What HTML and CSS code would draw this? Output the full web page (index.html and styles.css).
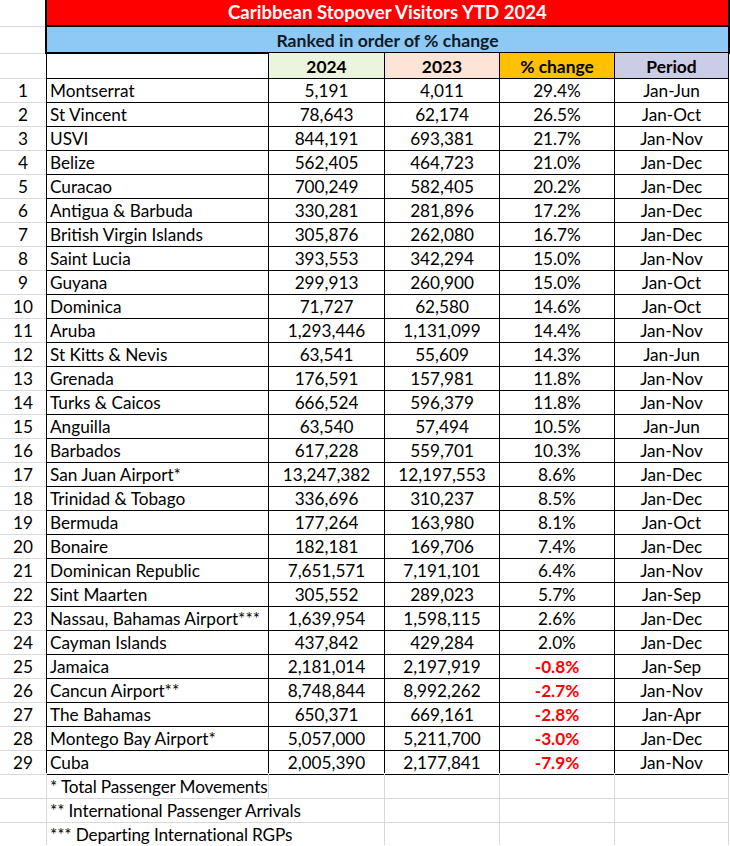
FILE: index.html
```html
<!DOCTYPE html>
<html lang="en">
<head>
<meta charset="utf-8">
<title>Caribbean Stopover Visitors YTD 2024</title>
<link rel="stylesheet" href="styles.css">
</head>
<body>
<div class="sheet">
  <div class="row band title-row"><div class="num"></div><div class="band-cell title">Caribbean Stopover Visitors YTD 2024</div></div>
  <div class="row band sub-row"><div class="num"></div><div class="band-cell sub">Ranked in order of % change</div></div>
  <div class="row head"><div class="num"></div><div class="c name"></div><div class="c y24">2024</div><div class="c y23">2023</div><div class="c pct">% change</div><div class="c per last">Period</div></div>

  <div class="row"><div class="num">1</div><div class="c name">Montserrat</div><div class="c">5,191</div><div class="c">4,011</div><div class="c">29.4%</div><div class="c last">Jan-Jun</div></div>
  <div class="row"><div class="num">2</div><div class="c name">St Vincent</div><div class="c">78,643</div><div class="c">62,174</div><div class="c">26.5%</div><div class="c last">Jan-Oct</div></div>
  <div class="row"><div class="num">3</div><div class="c name">USVI</div><div class="c">844,191</div><div class="c">693,381</div><div class="c">21.7%</div><div class="c last">Jan-Nov</div></div>
  <div class="row"><div class="num">4</div><div class="c name">Belize</div><div class="c">562,405</div><div class="c">464,723</div><div class="c">21.0%</div><div class="c last">Jan-Dec</div></div>
  <div class="row"><div class="num">5</div><div class="c name">Curacao</div><div class="c">700,249</div><div class="c">582,405</div><div class="c">20.2%</div><div class="c last">Jan-Dec</div></div>
  <div class="row"><div class="num">6</div><div class="c name">Antigua &amp; Barbuda</div><div class="c">330,281</div><div class="c">281,896</div><div class="c">17.2%</div><div class="c last">Jan-Dec</div></div>
  <div class="row"><div class="num">7</div><div class="c name">British Virgin Islands</div><div class="c">305,876</div><div class="c">262,080</div><div class="c">16.7%</div><div class="c last">Jan-Dec</div></div>
  <div class="row"><div class="num">8</div><div class="c name">Saint Lucia</div><div class="c">393,553</div><div class="c">342,294</div><div class="c">15.0%</div><div class="c last">Jan-Nov</div></div>
  <div class="row"><div class="num">9</div><div class="c name">Guyana</div><div class="c">299,913</div><div class="c">260,900</div><div class="c">15.0%</div><div class="c last">Jan-Oct</div></div>
  <div class="row"><div class="num">10</div><div class="c name">Dominica</div><div class="c">71,727</div><div class="c">62,580</div><div class="c">14.6%</div><div class="c last">Jan-Oct</div></div>
  <div class="row"><div class="num">11</div><div class="c name">Aruba</div><div class="c">1,293,446</div><div class="c">1,131,099</div><div class="c">14.4%</div><div class="c last">Jan-Nov</div></div>
  <div class="row"><div class="num">12</div><div class="c name">St Kitts &amp; Nevis</div><div class="c">63,541</div><div class="c">55,609</div><div class="c">14.3%</div><div class="c last">Jan-Jun</div></div>
  <div class="row"><div class="num">13</div><div class="c name">Grenada</div><div class="c">176,591</div><div class="c">157,981</div><div class="c">11.8%</div><div class="c last">Jan-Nov</div></div>
  <div class="row"><div class="num">14</div><div class="c name">Turks &amp; Caicos</div><div class="c">666,524</div><div class="c">596,379</div><div class="c">11.8%</div><div class="c last">Jan-Nov</div></div>
  <div class="row"><div class="num">15</div><div class="c name">Anguilla</div><div class="c">63,540</div><div class="c">57,494</div><div class="c">10.5%</div><div class="c last">Jan-Jun</div></div>
  <div class="row"><div class="num">16</div><div class="c name">Barbados</div><div class="c">617,228</div><div class="c">559,701</div><div class="c">10.3%</div><div class="c last">Jan-Nov</div></div>
  <div class="row"><div class="num">17</div><div class="c name">San Juan Airport*</div><div class="c">13,247,382</div><div class="c">12,197,553</div><div class="c">8.6%</div><div class="c last">Jan-Dec</div></div>
  <div class="row"><div class="num">18</div><div class="c name">Trinidad &amp; Tobago</div><div class="c">336,696</div><div class="c">310,237</div><div class="c">8.5%</div><div class="c last">Jan-Dec</div></div>
  <div class="row"><div class="num">19</div><div class="c name">Bermuda</div><div class="c">177,264</div><div class="c">163,980</div><div class="c">8.1%</div><div class="c last">Jan-Oct</div></div>
  <div class="row"><div class="num">20</div><div class="c name">Bonaire</div><div class="c">182,181</div><div class="c">169,706</div><div class="c">7.4%</div><div class="c last">Jan-Dec</div></div>
  <div class="row"><div class="num">21</div><div class="c name">Dominican Republic</div><div class="c">7,651,571</div><div class="c">7,191,101</div><div class="c">6.4%</div><div class="c last">Jan-Nov</div></div>
  <div class="row"><div class="num">22</div><div class="c name">Sint Maarten</div><div class="c">305,552</div><div class="c">289,023</div><div class="c">5.7%</div><div class="c last">Jan-Sep</div></div>
  <div class="row"><div class="num">23</div><div class="c name">Nassau, Bahamas Airport***</div><div class="c">1,639,954</div><div class="c">1,598,115</div><div class="c">2.6%</div><div class="c last">Jan-Dec</div></div>
  <div class="row"><div class="num">24</div><div class="c name">Cayman Islands</div><div class="c">437,842</div><div class="c">429,284</div><div class="c">2.0%</div><div class="c last">Jan-Dec</div></div>
  <div class="row"><div class="num">25</div><div class="c name">Jamaica</div><div class="c">2,181,014</div><div class="c">2,197,919</div><div class="c neg">-0.8%</div><div class="c last">Jan-Sep</div></div>
  <div class="row"><div class="num">26</div><div class="c name">Cancun Airport**</div><div class="c">8,748,844</div><div class="c">8,992,262</div><div class="c neg">-2.7%</div><div class="c last">Jan-Nov</div></div>
  <div class="row"><div class="num">27</div><div class="c name">The Bahamas</div><div class="c">650,371</div><div class="c">669,161</div><div class="c neg">-2.8%</div><div class="c last">Jan-Apr</div></div>
  <div class="row"><div class="num">28</div><div class="c name">Montego Bay Airport*</div><div class="c">5,057,000</div><div class="c">5,211,700</div><div class="c neg">-3.0%</div><div class="c last">Jan-Dec</div></div>
  <div class="row"><div class="num">29</div><div class="c name">Cuba</div><div class="c">2,005,390</div><div class="c">2,177,841</div><div class="c neg">-7.9%</div><div class="c last">Jan-Nov</div></div>

  <div class="row note"><div class="num"></div><div class="g name">* Total Passenger Movements</div><div class="g"></div><div class="g"></div><div class="g"></div><div class="g last"></div></div>
  <div class="row note"><div class="num"></div><div class="g name wide">** International Passenger Arrivals</div><div class="g"></div><div class="g"></div><div class="g last"></div></div>
  <div class="row note"><div class="num"></div><div class="g name wide">*** Departing International RGPs</div><div class="g"></div><div class="g"></div><div class="g last"></div></div>
</div>
</body>
</html>
```

FILE: styles.css
```css
html, body {
  margin: 0;
  padding: 0;
  background: #ffffff;
}

.sheet {
  width: 730px;
  font-family: Lato, "Liberation Sans", sans-serif;
  font-size: 17.2px;
  color: #000;
}

.row {
  display: grid;
  grid-template-columns: 46px 222px 116px 115px 115px 115px;
  height: 24px;
}

.row > div {
  box-sizing: border-box;
  white-space: nowrap;
  overflow: visible;
  line-height: 23px;
  padding-top: 2px;
}

.num {
  border-bottom: 1px solid #d9d9d9;
  text-align: center;
}

.c {
  border-left: 1px solid #000;
  border-bottom: 1px solid #000;
  text-align: center;
}

.c.last {
  border-right: 1px solid #000;
}

.c.name,
.g.name {
  text-align: left;
  padding-left: 3px;
}

.neg {
  color: #ff0000;
  font-weight: 700;
}

/* banded header rows */
.band {
  grid-template-columns: 45px 685px;
}

.band-cell {
  border-left: 2px solid #000;
  border-right: 2px solid #000;
  border-bottom: 2px solid #000;
  text-align: center;
  font-weight: 700;
  font-size: 18.6px;
}

.title-row {
  height: 27px;
}

.title-row > div {
  padding-top: 1px;
}

.title {
  background: #ff0000;
  color: #ffffff;
}

.sub-row {
  height: 26px;
}

.sub {
  background: #8ec9f5;
  color: #0e1a26;
  font-size: 17.6px;
}

.head .c {
  font-weight: 700;
  font-size: 17.4px;
}

.head .y24 { background: #ebf5de; }
.head .y23 { background: #fce4d6; }
.head .pct { background: #ffc000; }
.head .per { background: #cbcce6; }

/* footnote rows */
.g {
  border-left: 1px solid #d9d9d9;
  border-bottom: 1px solid #d9d9d9;
}

.g.last {
  border-right: 1px solid #d9d9d9;
}

.g.wide {
  grid-column: span 2;
}

.note .g.name {
  letter-spacing: -0.15px;
}
```
